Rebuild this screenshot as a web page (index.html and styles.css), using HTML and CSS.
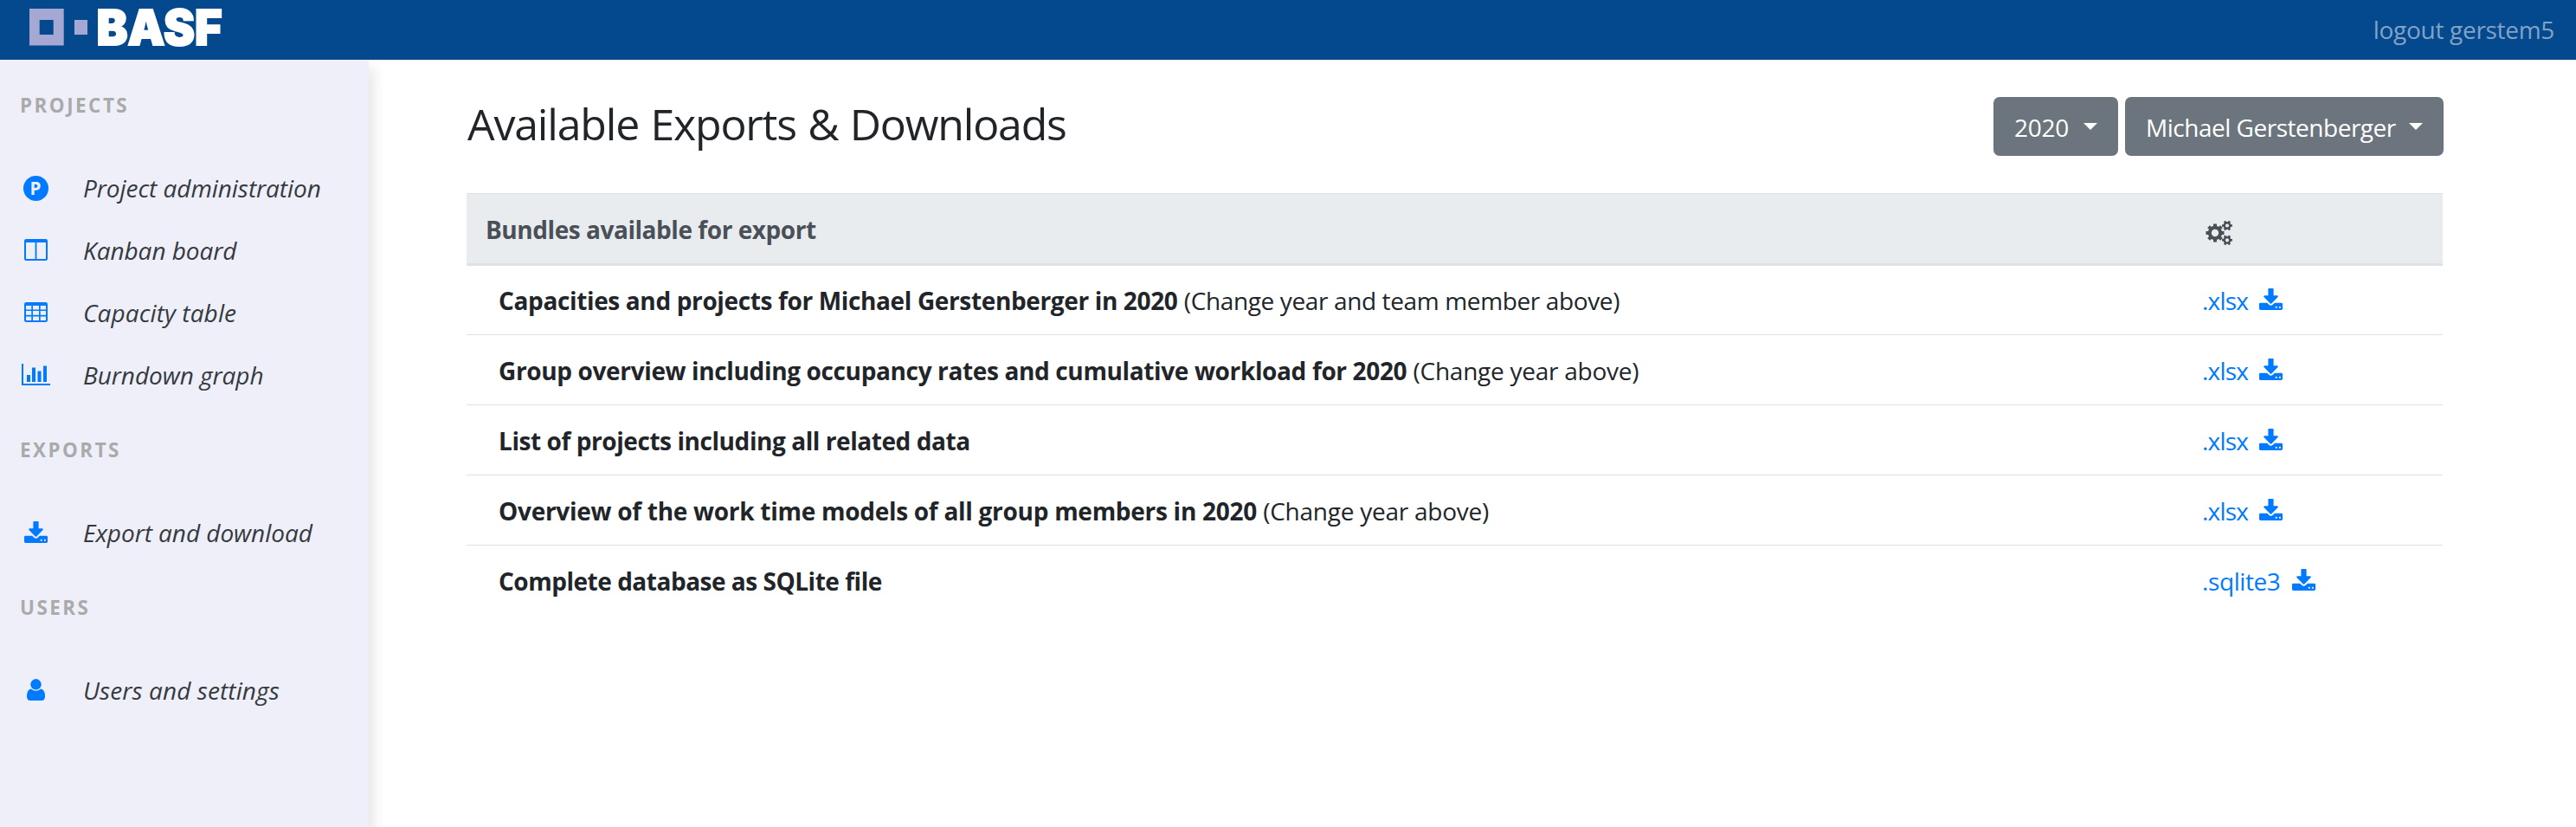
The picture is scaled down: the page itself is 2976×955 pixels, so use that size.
FILE: index.html
```html
<!DOCTYPE html>
<html lang="en">
<head>
<meta charset="utf-8">
<title>Available Exports &amp; Downloads</title>
<link rel="stylesheet" href="styles.css">
</head>
<body>
<svg width="0" height="0" class="sprite" aria-hidden="true">
  <symbol id="download" viewBox="64 0 1664 1536">
    <path d="M1344 1344q0-26-19-45t-45-19-45 19-19 45 19 45 45 19 45-19 19-45zm256 0q0-26-19-45t-45-19-45 19-19 45 19 45 45 19 45-19 19-45zm128-224v320q0 40-28 68t-68 28h-1472q-40 0-68-28t-28-68v-320q0-40 28-68t68-28h465l135 136q58 56 136 56t136-56l136-136h464q40 0 68 28t28 68zm-325-569q17 41-14 70l-448 448q-18 19-45 19t-45-19l-448-448q-31-29-14-70 17-39 59-39h256v-448q0-26 19-45t45-19h256q26 0 45 19t19 45v448h256q42 0 59 39z"/>
  </symbol>
</svg>

<header class="navbar">
  <svg class="logo" width="222" height="45" viewBox="0 0 222 45">
    <path class="logo-mark" fill-rule="evenodd" d="M0 1h39.7v42.5H0zM11.7 14v17h16V14zM52 14h15v17H52z"/>
    <text class="logo-text" x="77.500" y="42.500" textLength="145" lengthAdjust="spacingAndGlyphs">BASF</text>
  </svg>
  <a class="logout">logout gerstem5</a>
</header>

<div class="layout">
  <nav class="sidebar">
    <h6 class="group">PROJECTS</h6>
    <a class="item"><span class="ico"><svg width="29" height="29" viewBox="0 0 29 29"><circle cx="14.5" cy="14.5" r="14.5"/><text class="p-letter" x="7.4" y="21.7">P</text></svg></span><span>Project administration</span></a>
    <a class="item"><span class="ico"><svg width="27" height="25" viewBox="0 0 27 25"><path fill-rule="evenodd" d="M2.2 0h22.6Q27 0 27 2.2v20.6Q27 25 24.800 25H2.200Q0 25 0 22.800V2.200Q0 0 2.200 0zM2 4v18.600q0 .4.4.4h10.200V4zM14.400 4v19h10.200q.4 0 .4-.4V4z"/></svg></span><span>Kanban board</span></a>
    <a class="item"><span class="ico"><svg width="27" height="23" viewBox="0 0 27 23"><path fill-rule="evenodd" d="M2.200 0h22.600Q27 0 27 2.200v18.600Q27 23 24.800 23H2.200Q0 23 0 20.800V2.200Q0 0 2.200 0zM2 4v4.500h6.300V4zM10 4v4.500h7V4zM18.700 4v4.500H25V4zM2 10.100v4.700h6.300v-4.700zM10 10.100v4.700h7v-4.700zM18.700 10.100v4.700H25v-4.700zM2 16.500V21h6.300v-4.500zM10 16.500V21h7v-4.500zM18.700 16.500V21H25v-4.500z"/></svg></span><span class="wide">Capacity table</span></a>
    <a class="item"><span class="ico"><svg width="33" height="25" viewBox="0 0 33 25"><path d="M0 0h2v23h31v2H0zM6 13h4v8H6zM12 4.500h4V21h-4zM18.500 8.500h4V21h-4zM25 2.500h4V21h-4z"/></svg></span><span>Burndown graph</span></a>
    <h6 class="group">EXPORTS</h6>
    <a class="item"><span class="ico"><svg width="27" height="25"><use href="#download"/></svg></span><span>Export and download</span></a>
    <h6 class="group">USERS</h6>
    <a class="item"><span class="ico"><svg width="21" height="25" viewBox="0 0 21 25"><circle cx="10.500" cy="6.300" r="6.200"/><path d="M5 11.500Q7.500 13.800 10.500 13.800T16 11.500Q21 12 21 20.300Q21 25 16.800 25H4.200Q0 25 0 20.300Q0 12 5 11.500z"/></svg></span><span class="wide">Users and settings</span></a>
  </nav>

  <main class="content">
    <div class="toolbar">
      <h3 class="title">Available Exports &amp; Downloads</h3>
      <div class="buttons">
        <button class="btn btn-year">2020</button>
        <button class="btn btn-member">Michael Gerstenberger</button>
      </div>
    </div>

    <div class="table">
      <div class="row head">
        <div class="cell">Bundles available for export</div>
        <div class="cell-file">
          <svg class="cogs" width="32" height="30" viewBox="0 0 32 30">
            <g fill="none">
              <circle cx="11" cy="15" r="6.200" stroke-width="4"/>
              <path stroke-width="4" d="M11 4.500v4M11 21.500v4M.5 15h4M17.500 15h4M3.600 7.600l2.800 2.800M15.600 19.600l2.800 2.800M3.600 22.400l2.800-2.800M15.600 10.400l2.800-2.800"/>
              <circle cx="25" cy="6.500" r="3.300" stroke-width="2.400"/>
              <path stroke-width="2.600" d="M19 6.500h2.500M28.500 6.500H31M22 1.300l1.300 2.200M28 1.300l-1.300 2.200M22 11.700l1.300-2.200M28 11.700l-1.300-2.200"/>
              <circle cx="25" cy="23.300" r="3.300" stroke-width="2.400"/>
              <path stroke-width="2.600" d="M19 23.300h2.500M28.500 23.300H31M22 18.100l1.300 2.200M28 18.100l-1.300 2.200M22 28.500l1.300-2.200M28 28.500l-1.300-2.200"/>
            </g>
          </svg>
        </div>
      </div>
      <div class="row">
        <div class="cell"><b class="t1">Capacities and projects for Michael Gerstenberger in 2020</b> <span class="note-long">(Change year and team member above)</span></div>
        <a class="cell-file"><span class="ext">.xlsx</span><svg width="27" height="25"><use href="#download"/></svg></a>
      </div>
      <div class="row">
        <div class="cell"><b class="t2">Group overview including occupancy rates and cumulative workload for 2020</b> <span class="note">(Change year above)</span></div>
        <a class="cell-file"><span class="ext">.xlsx</span><svg width="27" height="25"><use href="#download"/></svg></a>
      </div>
      <div class="row">
        <div class="cell"><b class="t3">List of projects including all related data</b></div>
        <a class="cell-file"><span class="ext">.xlsx</span><svg width="27" height="25"><use href="#download"/></svg></a>
      </div>
      <div class="row">
        <div class="cell"><b class="t4">Overview of the work time models of all group members in 2020</b> <span class="note">(Change year above)</span></div>
        <a class="cell-file"><span class="ext">.xlsx</span><svg width="27" height="25"><use href="#download"/></svg></a>
      </div>
      <div class="row">
        <div class="cell"><b class="t5">Complete database as SQLite file</b></div>
        <a class="cell-file"><span class="ext ext-db">.sqlite3</span><svg width="27" height="25"><use href="#download"/></svg></a>
      </div>
    </div>
  </main>
</div>
</body>
</html>
```
FILE: styles.css
```css
* { box-sizing: border-box; }
body {
  margin: 0;
  height: 955px;
  overflow: hidden;
  display: flex;
  flex-direction: column;
  background: #fff;
  color: #212529;
  font: 28px/43px "Open Sans", "Noto Sans", sans-serif;
}
svg { display: block; flex: none; }
.sprite { position: absolute; }

.navbar {
  height: 69px;
  flex: none;
  z-index: 1;
  display: flex;
  justify-content: space-between;
  background: #04488d;
  padding: 9px 25px 0 34px;
}
.logo { overflow: visible; }
.logo-mark { fill: #a5a8d3; }
.logo-text {
  fill: #fff;
  stroke: #fff;
  stroke-width: 2px;
  font: 900 56px Inter, "Liberation Sans", sans-serif;
}
.logout { color: #81a3c6; letter-spacing: -.300px; padding-top: 4px; }

.layout { flex: 1; display: flex; }
.sidebar {
  width: 426px;
  background: #efeffa;
  padding-top: 2px;
  box-shadow: 6px 10px 14px rgba(0, 0, 0, .1);
}
.group {
  height: 110px;
  margin: 0;
  padding: 36px 0 0 23px;
  color: #aaa;
  font-size: 22.400px;
  line-height: 30px;
  font-weight: 700;
  letter-spacing: 2.500px;
}
.item {
  height: 72px;
  display: flex;
  align-items: center;
  color: #343a40;
  font-style: italic;
  letter-spacing: -.05px;
}
.item .wide { letter-spacing: .1px; }
.ico {
  width: 83px;
  margin-right: 13px;
  display: flex;
  justify-content: center;
  fill: #007bff;
}
.item svg { margin-top: -2px; }
.item:nth-of-type(1) svg { margin-top: 0; }
.p-letter { fill: #efeffa; font: 700 20.500px "Open Sans", sans-serif; }

.content { flex: 1; padding: 43px 154px 0 113px; }
.toolbar {
  height: 68px;
  margin-bottom: 43px;
  display: flex;
  justify-content: space-between;
}
.title {
  margin: 0 0 0 1px;
  font-size: 50px;
  line-height: 63px;
  font-weight: 400;
  letter-spacing: -1.180px;
  word-spacing: 1.500px;
}
.buttons { display: flex; gap: 8px; margin-right: -1px; }
.btn {
  height: 68px;
  display: flex;
  align-items: center;
  justify-content: space-between;
  border: 0;
  border-radius: 7px;
  padding: 2px 24px 0 24px;
  background: #6c757d;
  color: #fff;
  font: inherit;
}
.btn::after {
  content: "";
  margin-top: -2px;
  border: 8.640px solid transparent;
  border-top-color: #fff;
  border-bottom: 0;
}
.btn-year { width: 144px; letter-spacing: -.3px; }
.btn-member { width: 368px; letter-spacing: -.480px; }

.row {
  height: 81px;
  display: flex;
  align-items: center;
  padding: 2px 0 0 37px;
  border-top: 1px solid #dee2e6;
}
.row.head {
  height: 84px;
  padding-left: 22px;
  border-bottom: 3px solid #dee2e6;
  background: #e9ecef;
  color: #495057;
  font-weight: 700;
  letter-spacing: -.450px;
}
.head + .row { height: 79px; border-top: 0; }
.cell { flex: 1; white-space: nowrap; }
.cell-file {
  width: 278px;
  display: flex;
  align-items: center;
  color: #007bff;
  fill: #007bff;
}
.cell-file svg { margin-top: -4px; }
.cell-file .cogs { margin: 8px 0 0 4px; stroke: #495057; }
.ext { width: 53px; margin-right: 13px; letter-spacing: -.8px; }
.ext-db { width: 91px; letter-spacing: -.400px; }
.t1 { letter-spacing: -.360px; }
.t2 { letter-spacing: -.360px; }
.t3 { letter-spacing: -.430px; }
.t4 { letter-spacing: -.280px; }
.t5 { letter-spacing: -.480px; }
.note-long { letter-spacing: -.370px; }
.note { letter-spacing: -.250px; }
```
